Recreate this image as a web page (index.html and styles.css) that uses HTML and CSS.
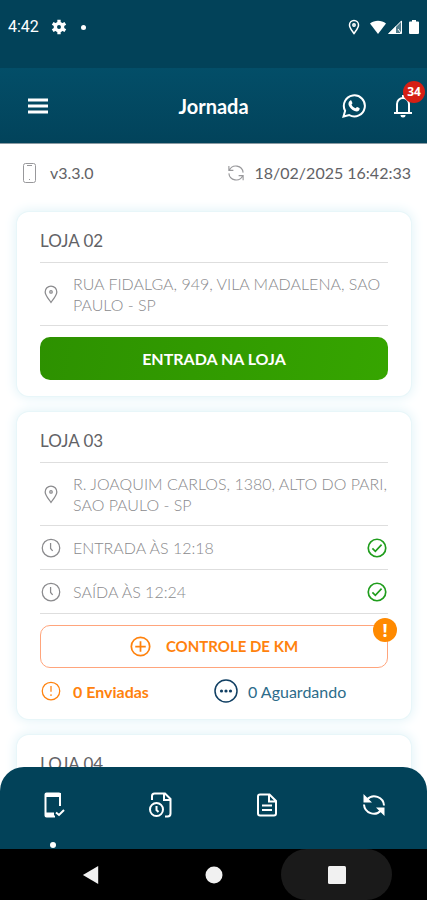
FILE: index.html
```html
<!DOCTYPE html>
<html lang="pt-BR">
<head>
<meta charset="utf-8">
<meta name="viewport" content="width=device-width, initial-scale=1">
<title>Jornada</title>
<link rel="stylesheet" href="styles.css">
</head>
<body>
<svg class="sprite" aria-hidden="true">
  <symbol id="pin" viewBox="0 0 24 24"><path d="M12 22C9 17.500 5 13.500 5 9.500a7 7 0 0 1 14 0C19 13.500 15 17.500 12 22z"/><circle cx="12" cy="9.500" r="1.500"/></symbol>
  <symbol id="clock" viewBox="0 0 24 24"><circle cx="12" cy="12" r="10.500"/><path d="M11.500 6v6.500l2.500 3"/></symbol>
  <symbol id="check" viewBox="0 0 24 24"><circle cx="12" cy="12" r="10.500"/><path d="M6.500 12.500l3.500 3.500 7.500-8"/></symbol>
  <symbol id="sync" viewBox="0 0 24 24"><path d="M2.500 2.500v6h6M3 8.500A9.700 9.700 0 0 1 21.500 11.500M21.500 21.500v-6h-6M21 15.500A9.700 9.700 0 0 1 2.500 12.500"/></symbol>
</svg>

<div class="status">
  <span class="status-time">4:42</span>
  <svg class="gear" viewBox="0 0 24 24" aria-hidden="true"><circle cx="12" cy="12" r="5.500"/><path d="M12 1v5M12 18v5M2.500 6.500l4.300 2.500M17.200 15l4.300 2.500M2.500 17.500L6.800 15M17.200 9l4.300-2.500"/></svg>
  <span class="status-dot"></span>
  <span class="status-icons">
    <svg class="status-pin" viewBox="0 0 12 16" aria-hidden="true"><path d="M6 14.500C4 11.500 1.500 9 1.500 5.900a4.500 4.500 0 0 1 9 0C10.500 9 8 11.500 6 14.500z"/><circle cx="6" cy="6" r="1.200"/></svg>
    <svg class="status-wifi" viewBox="0 0 16 14" aria-hidden="true"><path d="M0 3.500C4.500-.3 11.500-.3 16 3.500L8 14z"/></svg>
    <svg class="status-cell" viewBox="0 0 14 14" aria-hidden="true"><path class="faint" d="M14 0v14H0z"/><path class="solid" d="M8 6v8H0z"/><path class="line" d="M13.500 1v12.500H1zM10 9l3 4"/></svg>
    <svg class="status-battery" viewBox="0 0 10 14" aria-hidden="true"><path d="M3 0h4v1.500h2q1 0 1 1V13q0 1-1 1H1q-1 0-1-1V2.500q0-1 1-1h2z"/></svg>
  </span>
</div>

<header class="header">
  <button class="icon-button" type="button" aria-label="Menu"><svg class="menu" viewBox="0 0 20 16" aria-hidden="true"><path d="M0 2h20M0 8h20M0 14h20"/></svg></button>
  <h1>Jornada</h1>
  <div class="header-actions">
    <a class="icon-button" href="#whatsapp" aria-label="WhatsApp"><svg class="whatsapp" viewBox="0 0 24 24" aria-hidden="true"><path class="ring" d="M1.500 22.500l1.600-5.700A10.500 10.500 0 1 1 7.200 21z"/><path class="phone" d="M8.300 6.500c.6-.3 1.100-.1 1.300.4l.8 2c.2.500-.7 1.200-.9 1.600.7 1.700 2 3 4 3.800.5-.3 1.200-1.500 1.700-1.300l2.200 1.100c.6.400.1 1.800-.4 2.400-1 1-2.600 1.200-4.400.5-2.800-1-5.200-3.500-6-5.900-.5-1.900.4-4 1.700-4.600z"/></svg></a>
    <button class="icon-button bell-button" type="button" aria-label="Notificações"><svg class="bell" viewBox="0 0 20 24" aria-hidden="true"><path class="line" d="M1 19h18M4 18.500V10a6 6 0 0 1 12 0v8.500M10 1v3"/><path class="clapper" d="M7.500 21h5a2.500 2.500 0 0 1-5 0z"/></svg><span class="badge">34</span></button>
  </div>
</header>

<main>
  <div class="meta">
    <span class="meta-item"><svg class="device" viewBox="0 0 16 22" aria-hidden="true"><rect x="1.500" y="1.500" width="12" height="19" rx="2"/><path d="M5 3.500h5M7 17.500h1"/></svg>v3.3.0</span>
    <span class="meta-item"><svg class="meta-sync" aria-hidden="true"><use href="#sync"/></svg>18/02/2025 16:42:33</span>
  </div>

  <section class="card">
    <h2>LOJA 02</h2>
    <p class="row"><span class="row-icon"><svg aria-hidden="true"><use href="#pin"/></svg></span><span class="row-text">RUA FIDALGA, 949, VILA MADALENA, SAO PAULO - SP</span></p>
    <button class="button button-enter" type="button">ENTRADA NA LOJA</button>
  </section>

  <section class="card">
    <h2>LOJA 03</h2>
    <p class="row"><span class="row-icon"><svg aria-hidden="true"><use href="#pin"/></svg></span><span class="row-text">R. JOAQUIM CARLOS, 1380, ALTO DO PARI, SAO PAULO - SP</span></p>
    <p class="row"><span class="row-icon"><svg aria-hidden="true"><use href="#clock"/></svg></span><span class="row-text">ENTRADA ÀS 12:18</span><svg class="done" aria-hidden="true"><use href="#check"/></svg></p>
    <p class="row"><span class="row-icon"><svg aria-hidden="true"><use href="#clock"/></svg></span><span class="row-text">SAÍDA ÀS 12:24</span><svg class="done" aria-hidden="true"><use href="#check"/></svg></p>
    <button class="button button-km" type="button">
      <svg viewBox="0 0 24 24" aria-hidden="true"><circle cx="12" cy="12" r="10.500"/><path d="M12 6v12M6 12h12"/></svg>
      CONTROLE DE KM
      <span class="alert">!</span>
    </button>
    <div class="counts">
      <span class="count sent"><span class="row-icon"><svg viewBox="0 0 24 24" aria-hidden="true"><circle cx="12" cy="12" r="10.500"/><path d="M12 6v7M12 16v2"/></svg></span>0 Enviadas</span>
      <span class="count waiting"><svg viewBox="0 0 24 24" aria-hidden="true"><circle class="ring" cx="12" cy="12" r="11"/><circle cx="7.500" cy="12" r="1.600"/><circle cx="12" cy="12" r="1.600"/><circle cx="16.500" cy="12" r="1.600"/></svg>0 Aguardando</span>
    </div>
  </section>

  <section class="card">
    <h2>LOJA 04</h2>
    <p class="row"></p>
  </section>
</main>

<footer class="bottom">
  <nav class="tabs">
    <a class="active" href="#jornada" aria-label="Jornada"><svg viewBox="0 0 24 26" aria-hidden="true"><path d="M19 14V2.500q0-1-1-1H5.500q-1 0-1 1v21q0 1 1 1H14"/><path class="fill" d="M4 1h16v4H4zM4 20.500h9V25H4z"/><path d="M15 20.500l3 2.500 5-5"/></svg></a>
    <a href="#historico" aria-label="Histórico"><svg viewBox="0 0 24 26" aria-hidden="true"><circle cx="8.500" cy="17.500" r="6.500"/><path d="M8.500 14v4l2 2M4 8V4q0-2.500 2.500-2.500H17L22.500 7v14.500q0 3-3 3H17M16 2v6h6"/></svg></a>
    <a href="#documentos" aria-label="Documentos"><svg viewBox="0 0 24 26" aria-hidden="true"><path d="M14.500 2.500H5q-2 0-2 2v17q0 2 2 2h14q2 0 2-2V9zM14 3v6.500h6.500M7 13.500h10M7 18h10"/></svg></a>
    <a href="#sincronizar" aria-label="Sincronizar"><svg viewBox="0 0 24 24" aria-hidden="true"><path d="M5 6.500A9.800 9.800 0 0 1 22 12.500M19 17.500A9.800 9.800 0 0 1 2 11.500"/><path class="fill" d="M1.500 1v8.500H10zM22.500 23v-8.500H14z"/></svg></a>
  </nav>
  <div class="system">
    <button type="button" aria-label="Voltar"><svg viewBox="0 0 18 20" aria-hidden="true"><path d="M17 0v20L0 10z"/></svg></button>
    <button type="button" aria-label="Início"><svg viewBox="0 0 18 18" aria-hidden="true"><circle cx="9" cy="9" r="8.500"/></svg></button>
    <button class="pressed" type="button" aria-label="Recentes"><svg viewBox="0 0 18 18" aria-hidden="true"><rect width="18" height="18" rx="1.500"/></svg></button>
  </div>
</footer>
</body>
</html>
```
FILE: styles.css
```css
* { box-sizing: border-box; }
body {
  margin: 0;
  height: 100vh;
  overflow: hidden;
  background: #fff;
  color: #626266;
  font-family: Lato, "Open Sans", sans-serif;
  font-size: 16px;
  line-height: 21px;
}
h1, h2, p { margin: 0; }
button { border: 0; padding: 0; background: none; color: inherit; font: inherit; cursor: pointer; }
svg { display: block; flex: none; fill: none; stroke: currentColor; stroke-width: 2; }
.sprite { position: absolute; width: 0; height: 0; }

.status {
  display: flex;
  align-items: center;
  height: 68px;
  padding: 0 8px 14px;
  background: #024259;
  color: #fff;
}
.status-time { font: 400 16px/20px Roboto, sans-serif; }
.gear { width: 16px; height: 16px; margin-left: 12px; stroke-width: 5; }
.status-dot { width: 5px; height: 5px; margin-left: 14px; border-radius: 50%; background: #fff; }
.status-icons { display: flex; align-items: center; margin-left: auto; }
.status-icons svg { height: 14px; fill: currentColor; stroke: none; }
.status-icons .status-pin { width: 12px; height: 16px; fill: none; stroke: currentColor; stroke-width: 1.5; }
.status-wifi { width: 16px; margin-left: 10px; }
.status-cell { width: 14px; margin: 0 7px 0 2px; }
.status-cell .faint { opacity: .3; }
.status-icons .line { fill: none; stroke: currentColor; stroke-width: 1; }
.status-battery { width: 10px; }

.header {
  display: grid;
  grid-template-columns: 1fr auto 1fr;
  align-items: center;
  height: 76px;
  padding: 0 28px;
  background: linear-gradient(#034e68, #02435b);
  border-bottom: 1px solid #8a9aa2;
  color: #fff;
}
h1 { font-size: 20px; line-height: 24px; font-weight: 700; }
.icon-button { color: #fff; }
.menu { width: 20px; height: 16px; stroke-width: 3; }
.header-actions { display: flex; justify-content: flex-end; align-items: center; gap: 27px; margin-right: -14px; }
.whatsapp { width: 24px; height: 24px; }
.whatsapp .phone { fill: currentColor; stroke: none; }
.bell-button { position: relative; }
.bell { width: 20px; height: 24px; }
.bell .clapper { fill: currentColor; stroke: none; }
.badge {
  position: absolute;
  top: -13px;
  right: -12px;
  width: 22px;
  height: 22px;
  border-radius: 50%;
  background: #d61f14;
  font: 700 12px/22px "Open Sans", sans-serif;
  text-align: center;
}

.meta { display: flex; justify-content: space-between; padding: 18px 16px 29px 22px; }
.meta-item { display: flex; align-items: center; height: 21px; }
.meta svg { color: #98989b; }
.device { width: 16px; height: 22px; margin-right: 12px; stroke-width: 1; }
.meta-sync { width: 18px; height: 18px; margin-right: 10px; stroke-width: 1.5; }

.card {
  margin: 0 16px 16px 17px;
  padding: 12px 23px 16px;
  border-radius: 12px;
  background: #fff;
  box-shadow: 0 0 0 1px #e8f6f9, 0 0 12px 2px #e2f3f8;
}
h2 { padding: 6px 0 11px; border-bottom: 1px solid #dedede; font-size: 17px; line-height: 21px; font-weight: 400; }
.row {
  display: flex;
  align-items: center;
  min-height: 44px;
  padding: 10px 0;
  border-bottom: 1px solid #dedede;
  color: #8a8a8d;
}
.row-icon { display: flex; justify-content: center; width: 22px; margin-right: 11px; flex: none; }
.row-icon svg { width: 20px; height: 20px; stroke-width: 1.5; }
.row-text { flex: 1; font-weight: 300; }
.done { width: 20px; height: 20px; margin-right: 1px; color: #1f9d1c; stroke-width: 2; }
.button {
  display: flex;
  justify-content: center;
  align-items: center;
  width: 100%;
  height: 43px;
  margin-top: 11px;
  border-radius: 10px;
  font-size: 15px;
}
.button-enter { background: linear-gradient(100deg, #2d9100, #36a500); color: #fff; font-size: 16px; font-weight: 700; }
.button-km { position: relative; gap: 15px; border: 1px solid #ffa57c; color: #ff820d; font-weight: 700; }
.button-km svg { width: 21px; height: 21px; }
.alert {
  position: absolute;
  top: -8px;
  right: -10px;
  width: 24px;
  height: 24px;
  border-radius: 50%;
  background: #ff8a00;
  color: #fff;
  font: 700 18px/24px "Open Sans", sans-serif;
  text-align: center;
}
.counts { display: grid; grid-template-columns: 1fr 1fr; margin-top: 11px; }
.count { display: flex; align-items: center; height: 24px; font-weight: 700; }
.sent { color: #ff820d; }
.waiting { color: #2c6c8a; font-weight: 400; }
.waiting svg { width: 24px; height: 24px; margin-right: 10px; color: #103f63; fill: currentColor; stroke: none; }
.waiting .ring { fill: none; stroke: currentColor; stroke-width: 1.5; }

.bottom { position: fixed; right: 0; bottom: 0; left: 0; }
.tabs { display: grid; grid-template-columns: repeat(4, 1fr); height: 82px; border-radius: 24px 24px 0 0; background: #024259; }
.tabs a { position: relative; display: flex; justify-content: center; padding-top: 25px; color: #fff; }
.tabs svg { width: 24px; height: 26px; }
.tabs .fill { fill: currentColor; stroke: none; }
.active::after { content: ""; position: absolute; bottom: 1px; width: 6px; height: 6px; border-radius: 50%; background: #fff; }
.system { display: grid; grid-template-columns: repeat(3, 1fr); padding: 0 29px; height: 51px; background: #000; color: #f1f1f1; }
.system button { display: flex; justify-content: center; align-items: center; }
.system svg { width: 18px; height: 18px; fill: currentColor; stroke: none; }
.system .pressed { margin: 0 6px; border-radius: 26px; background: #1a1a1a; }
```
